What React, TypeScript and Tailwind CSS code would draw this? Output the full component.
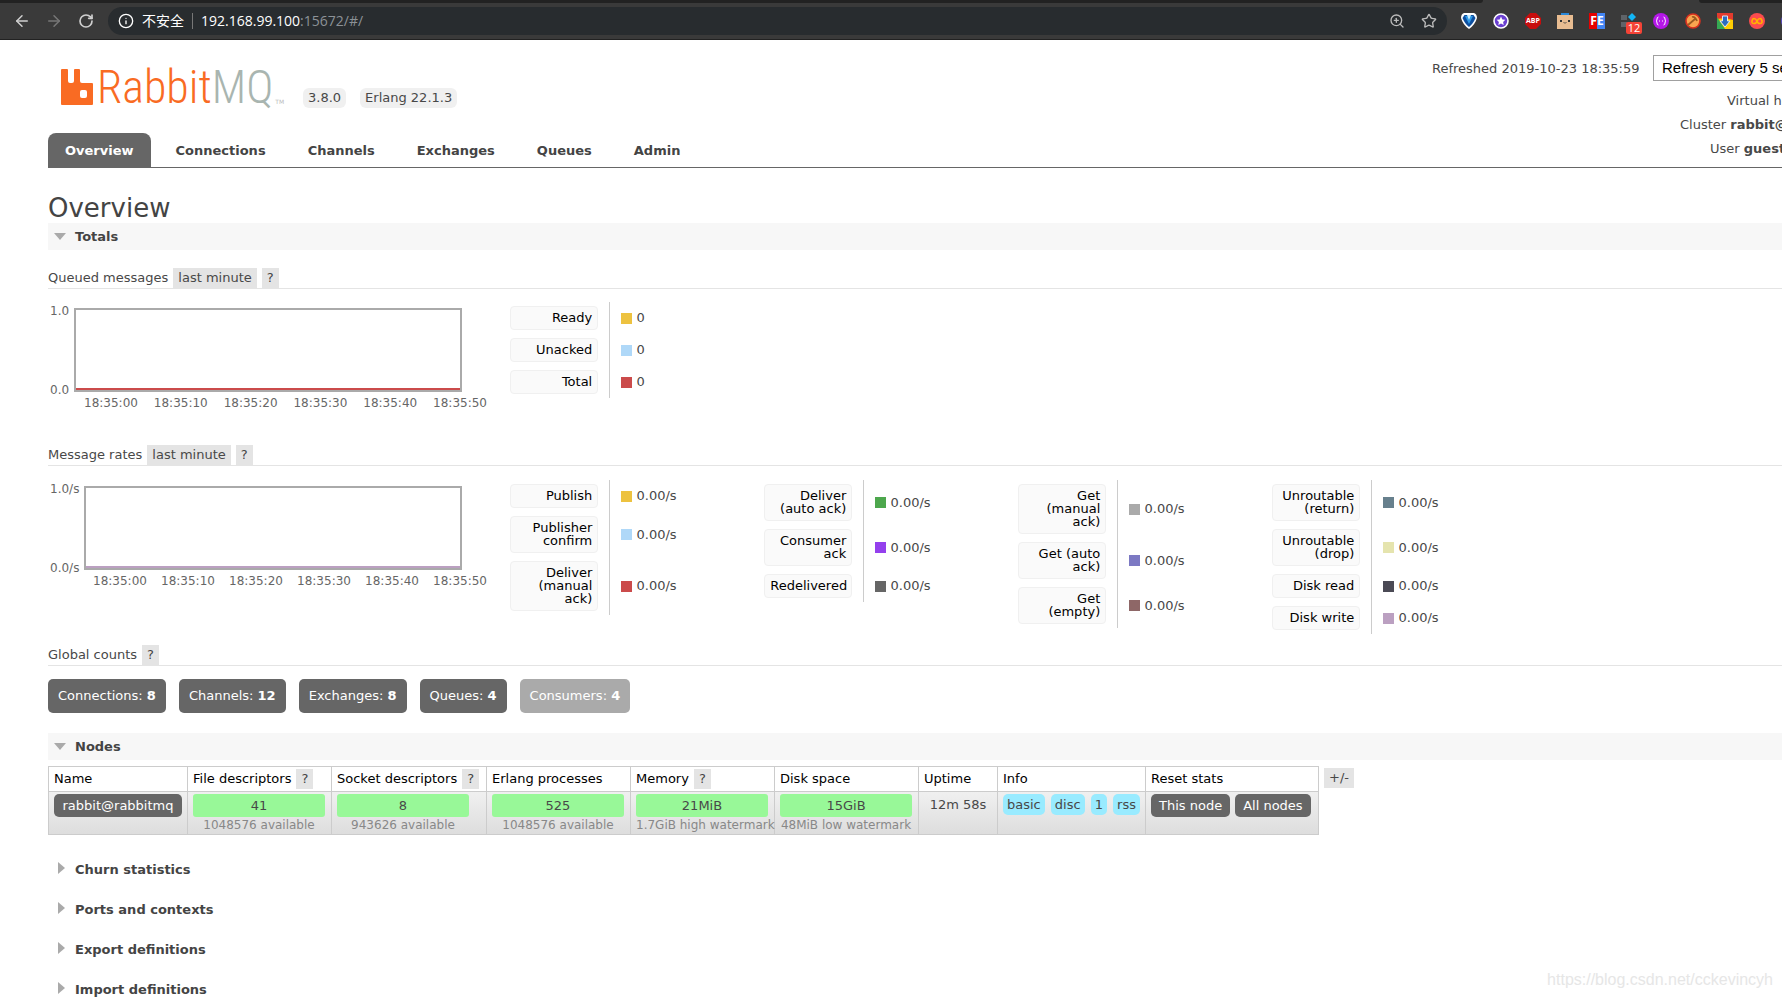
import { ArrowLeft, ArrowRight, Info, RotateCw, Star, ZoomIn } from "lucide-react";
import clsx from "clsx";
import type { ReactNode } from "react";

type LegendItem = { label: string; color: string; value: string };

const tabs = ["Overview", "Connections", "Channels", "Exchanges", "Queues", "Admin"];

const queued: LegendItem[] = [
  { label: "Ready", color: "bg-[#edc240]", value: "0" },
  { label: "Unacked", color: "bg-[#afd8f8]", value: "0" },
  { label: "Total", color: "bg-[#cb4b4b]", value: "0" },
];

const rates: LegendItem[][] = [
  [
    { label: "Publish", color: "bg-[#edc240]", value: "0.00/s" },
    { label: "Publisher confirm", color: "bg-[#afd8f8]", value: "0.00/s" },
    { label: "Deliver (manual ack)", color: "bg-[#cb4b4b]", value: "0.00/s" },
  ],
  [
    { label: "Deliver (auto ack)", color: "bg-[#4da74d]", value: "0.00/s" },
    { label: "Consumer ack", color: "bg-[#9440ed]", value: "0.00/s" },
    { label: "Redelivered", color: "bg-[#666666]", value: "0.00/s" },
  ],
  [
    { label: "Get (manual ack)", color: "bg-[#aaaaaa]", value: "0.00/s" },
    { label: "Get (auto ack)", color: "bg-[#7c79c3]", value: "0.00/s" },
    { label: "Get (empty)", color: "bg-[#8e6767]", value: "0.00/s" },
  ],
  [
    { label: "Unroutable (return)", color: "bg-[#67808d]", value: "0.00/s" },
    { label: "Unroutable (drop)", color: "bg-[#e5e4ae]", value: "0.00/s" },
    { label: "Disk read", color: "bg-[#4b4a55]", value: "0.00/s" },
    { label: "Disk write", color: "bg-[#bba0c1]", value: "0.00/s" },
  ],
];

const counts = [
  { label: "Connections", value: 8 },
  { label: "Channels", value: 12 },
  { label: "Exchanges", value: 8 },
  { label: "Queues", value: 4 },
  { label: "Consumers", value: 4, disabled: true },
];

const columns = [
  { title: "Name", width: "w-[139px]" },
  { title: "File descriptors", width: "w-[144px]", help: true },
  { title: "Socket descriptors", width: "w-[155px]", help: true },
  { title: "Erlang processes", width: "w-[144px]" },
  { title: "Memory", width: "w-[144px]", help: true },
  { title: "Disk space", width: "w-[144px]" },
  { title: "Uptime", width: "w-[79px]" },
  { title: "Info", width: "w-[148px]" },
  { title: "Reset stats", width: "w-[173px]" },
];

const meters = [
  { value: "41", note: "1048576 available" },
  { value: "8", note: "943626 available" },
  { value: "525", note: "1048576 available" },
  { value: "21MiB", note: "1.7GiB high watermark" },
  { value: "15GiB", note: "48MiB low watermark" },
];

const Extensions = () => (
  <div className="flex items-center gap-4">
    <svg className="size-4 shrink-0" viewBox="0 0 16 16">
      <path d="M3 0h10q3 1 3 5-2 7-8 11Q2 12 0 5q0-4 3-5z" fill="#fff" />
      <path d="M3.500 2h9l2 3Q12 11 8 14 4 11 1.500 5z" fill="#0d4fa0" />
      <path d="M4 3h8l-4 8z" fill="#2f9be8" />
      <path d="M6 2h4L8 7z" fill="#c8ecff" />
    </svg>
    <svg className="size-4 shrink-0" viewBox="0 0 16 16">
      <circle cx="8" cy="8" r="7" fill="#6a3fd0" stroke="#fff" strokeWidth="1.6" />
      <path d="M8 3.6l1.3 2.8 3 .4-2.2 2.1.6 3L8 10.4l-2.7 1.5.6-3-2.200-2.100 3-.4z" fill="#fff" />
    </svg>
    <div className="relative flex size-4 shrink-0 items-center justify-center">
      <svg className="absolute inset-0 size-4" viewBox="0 0 16 16">
        <path d="M5 0h6l5 5v6l-5 5H5l-5-5V5z" fill="#c70d0d" />
      </svg>
      <span className="relative text-[7px] font-bold text-white">ABP</span>
    </div>
    <svg className="size-4 shrink-0" viewBox="0 0 16 16">
      <path d="M4 0h8v3H4z" fill="#2b88d8" />
      <path d="M0 2h16v14H0z" fill="#e8bc91" />
      <path d="M3 7h2v2H3zM11 7h2v2h-2z" fill="#333" />
      <path d="M6.500 9.500q.8 1 1.500 0 .7 1 1.500 0" fill="none" stroke="#333" strokeWidth=".8" />
    </svg>
    <div className="flex size-4 shrink-0 items-center justify-center bg-linear-to-r from-[#e60000] from-50% to-[#4285f4] to-50% text-xs font-bold text-white">
      FE
    </div>
    <div className="relative size-4 shrink-0">
      <svg className="size-4" viewBox="0 0 16 16">
        <path d="M0 2h6v5H0zM0 9h6v5H0z" fill="#5f6368" />
        <path d="M11 0l4 4-4 4-4-4z" fill="#12b5f5" />
      </svg>
      <span className="absolute top-[9px] left-[5px] flex h-3 w-4 items-center justify-center rounded-xs bg-[#f44336] text-[11px] text-white">
        12
      </span>
    </div>
    <svg className="size-4 shrink-0" viewBox="0 0 16 16">
      <circle cx="8" cy="8" r="8" fill="#b517e8" />
      <path
        d="M5.500 4Q4 4 4 6T3 8q1 0 1 2t1.500 2M10.500 4Q12 4 12 6t1 2q-1 0-1 2t-1.500 2M6 8h1M9 8h1"
        fill="none"
        stroke="#fff"
      />
    </svg>
    <svg className="size-4 shrink-0" viewBox="0 0 16 16">
      <circle cx="8" cy="8" r="7" fill="#f9a550" stroke="#d9301f" strokeWidth="1.6" />
      <path d="M3 12l7-6M7 4q3-1 5 4" fill="none" stroke="#9a5a22" strokeWidth="1.8" />
    </svg>
    <svg className="size-4 shrink-0" viewBox="0 0 16 16">
      <path d="M0 0h16v16H0z" fill="#ffcd02" />
      <path d="M0 0h16v7L8 5 0 6z" fill="#e33b2e" />
      <path d="M0 4l8 12H0z" fill="#35a853" />
      <path d="M5.500 3h5v5H13l-5 6-5-6h2.500z" fill="#2a6cc0" stroke="#dce8f5" />
    </svg>
    <svg className="size-4 shrink-0" viewBox="0 0 16 16">
      <circle cx="8" cy="8" r="8" fill="#fb4b4e" />
      <path
        d="M8 8Q6.500 5.500 5 5.500T3 8t2 2.500T8 8q1.500-2.500 3-2.500T13 8t-2 2.500T8 8"
        fill="none"
        stroke="#ffb300"
        strokeWidth="1.600"
      />
    </svg>
    <svg className="size-4 shrink-0" viewBox="0 0 16 16">
      <circle cx="8" cy="8" r="8" fill="#5b4bc4" />
    </svg>
  </div>
);

const BrowserBar = () => (
  <div className="shrink-0 border-b border-[#222] bg-[#3a3a3a] font-['Open_Sans','Noto_Sans_CJK_SC',sans-serif]">
    <div className="flex h-[3px]">
      <div className="flex-1 rounded-br bg-[#222]" />
      <div className="w-[216px]" />
      <div className="w-[83px] rounded-bl bg-[#222]" />
    </div>
    <div className="flex h-9 items-center pl-3">
      <button aria-label="Back" className="mr-3 p-px text-[#d0d0d0]">
        <ArrowLeft className="size-[18px]" />
      </button>
      <button aria-label="Forward" className="mr-3 p-px text-[#777]">
        <ArrowRight className="size-[18px]" />
      </button>
      <button aria-label="Reload" className="mr-3 p-px text-[#d0d0d0]">
        <RotateCw className="size-[18px] p-px" strokeWidth={2.5} />
      </button>
      <div className="flex h-7 flex-1 items-center rounded-full bg-[#282c2f] px-2.5 text-sm text-white">
        <Info className="mr-2 size-4" />
        <span>不安全</span>
        <span className="mx-2 h-4 w-px bg-[#777]" />
        <span>192.168.99.100</span>
        <span className="flex-1 text-[#8c9297]">:15672/#/</span>
        <ZoomIn className="mr-4 size-4 text-[#bbb]" />
        <Star className="size-4 text-[#bbb]" />
      </div>
      <div className="w-[335px] shrink-0 pl-[14px]">
        <Extensions />
      </div>
    </div>
  </div>
);

const Logo = () => (
  <a href="#/" className="flex h-[42px] w-[228px] items-end whitespace-nowrap">
    <svg className="mr-1 ml-[3px] h-[38px] w-8 shrink-0" viewBox="3 4 32 38">
      <path
        d="M3 6q0-1 1-1h5q1 0 1 1v11q0 2 2 2h2q2 0 2-2V6q0-1 1-1h4q1 0 1 1v11q0 2 2 2h10q1 0 1 1v20q0 1-1 1H4q-1 0-1-1z"
        fill="#f96b23"
      />
      <rect x="22" y="26" width="7" height="8" rx="2" fill="#fff" />
    </svg>
    <span className="font-['Liberation_Sans_Narrow','Roboto_Condensed','Open_Sans_Condensed',Roboto,sans-serif] text-[46px] leading-[38px] font-light text-[#f96b23]">
      Rabbit<span className="text-[#a9b5b0]">MQ</span>
    </span>
    <span className="pl-0.5 text-[6px] leading-[9px] text-[#bbb]">TM</span>
  </a>
);

const Header = () => (
  <header className="relative border-b border-[#666]">
    <div className="flex h-[93px] items-start pt-6 pl-[10px]">
      <Logo />
      <div className="flex gap-[14px] pt-6 pl-[17px]">
        <span className="rounded-md bg-[#f0f0f0] px-[5px] leading-5">3.8.0</span>
        <span className="rounded-md bg-[#f0f0f0] px-[5px] leading-5">Erlang 22.1.3</span>
      </div>
    </div>
    <nav className="flex">
      {tabs.map((tab, i) => (
        <a
          key={tab}
          href={"#/" + tab.toLowerCase()}
          className={clsx(
            "mr-2 h-[34px] rounded-t-lg px-[17px] pt-px leading-[34px] font-bold",
            i === 0 ? "bg-[#666] text-white" : "text-[#444]",
          )}
        >
          {tab}
        </a>
      ))}
    </nav>
    {/* status block is wider than the window and runs off its right edge */}
    <div className="absolute top-[15px] right-0 w-[350px] overflow-hidden whitespace-nowrap">
      <div className="flex h-[26px] items-center">
        <label htmlFor="refresh" className="w-[221px] shrink-0 pt-0.5">
          Refreshed 2019-10-23 18:35:59
        </label>
        <select
          id="refresh"
          className="h-[26px] w-[220px] shrink-0 appearance-none border border-[#a0a0a0] bg-white px-2 font-['Liberation_Sans',Arial,sans-serif] text-[15px] leading-5 text-black"
        >
          <option>Refresh every 5 seconds</option>
        </select>
      </div>
      <div className="pt-2 leading-6">
        <div className="pl-[295px]">Virtual host</div>
        <div className="pl-[248px]">
          Cluster <b>rabbit@rabbitmq</b>
        </div>
        <div className="pl-[278px]">
          User <b>guest</b>
        </div>
      </div>
    </div>
  </header>
);

const Help = () => <button className="bg-[#e4e4e4] px-[5px] leading-5 text-[#444]">?</button>;

const SectionBar = ({ children }: { children: ReactNode }) => (
  <h2 className="flex h-[27px] items-center gap-[9px] bg-[#f7f7f7] pl-1.5 font-bold text-[#444]">
    <svg className="h-[7px] w-3" viewBox="0 0 12 7">
      <path d="M0 0h12L6 7z" fill="#aaa" />
    </svg>
    {children}
  </h2>
);

const SubHeading = ({ title, range }: { title: string; range?: boolean }) => (
  <h3 className="flex items-end gap-[5px] border-b border-[#e4e4e4] leading-5">
    {title}
    {range && <button className="bg-[#e4e4e4] px-[5px] leading-5">last minute</button>}
    <Help />
  </h3>
);

type ChartProps = { unit: string; line: string; axis: string };

const Chart = ({ unit, line, axis }: ChartProps) => (
  <div className="mr-[22px] w-[440px] shrink-0 text-xs leading-[14px] text-[#666]">
    <div className="flex gap-[5px] pl-0.5">
      <div className="flex h-[95px] flex-col justify-between pt-0.5">
        <span>1.0{unit}</span>
        <span>0.0{unit}</span>
      </div>
      <div className="mt-1.5 mr-[26px] h-[84px] flex-1 border-2 border-[#aaa]">
        <div className={clsx("mt-[78px] h-0.5", line)} />
      </div>
    </div>
    <div className={clsx("flex justify-between pr-px leading-3", axis)}>
      {["00", "10", "20", "30", "40", "50"].map((s) => (
        <span key={s}>18:35:{s}</span>
      ))}
    </div>
  </div>
);

const Legend = ({ items }: { items: LegendItem[] }) => (
  <table className="w-[254px] border-collapse">
    <tbody>
      {items.map((item) => (
        <tr key={item.label}>
          <th className="w-[99px] border-r border-[#ccc] py-1 pr-[10px] font-normal">
            <button className="w-[88px] rounded-sm border border-[#f0f0f0] bg-[#fafafa] px-[5px] pt-1 pb-[5px] text-right leading-[13px] text-black">
              {item.label}
            </button>
          </th>
          <td className="pl-[11px]">
            <div className="flex items-center gap-[5px]">
              <span className={clsx("size-[11px]", item.color)} />
              {item.value}
            </div>
          </td>
        </tr>
      ))}
    </tbody>
  </table>
);

const NodesTable = () => (
  <div className="flex items-start gap-[5px] pt-1.5">
    <table className="w-[1270px] table-fixed border-collapse">
      <thead>
        <tr className="h-[25px] text-black">
          {columns.map((c) => (
            <th
              key={c.title}
              className={clsx("border border-[#ccc] px-[5px] py-0.5 text-left font-normal whitespace-nowrap", c.width)}
            >
              <div className="flex items-center gap-[5px] leading-5">
                {c.title}
                {c.help && <Help />}
              </div>
            </th>
          ))}
        </tr>
      </thead>
      <tbody>
        <tr className="bg-linear-to-b from-[#f0f0f0] to-[#dddddd] align-top whitespace-nowrap">
          <td className="border border-[#ccc] px-[5px] pt-0.5">
            <a href="#/nodes/rabbit" className="block rounded-[5px] bg-[#666] text-center leading-[23px] text-white">
              rabbit@rabbitmq
            </a>
          </td>
          {meters.map((m, i) => (
            <td key={i} className="border border-[#ccc] px-[5px] pt-0.5">
              <div className="w-[132px] text-center">
                <div className="rounded-[3px] bg-[#98f898] leading-[23px]">{m.value}</div>
                <div className="text-xs leading-[17px] text-[#888]">{m.note}</div>
              </div>
            </td>
          ))}
          <td className="border border-[#ccc] pt-0.5 text-center leading-[21px]">12m 58s</td>
          <td className="border border-[#ccc] px-[5px] pt-0.5">
            <div className="flex justify-between">
              {["basic", "disc", "1", "rss"].map((t) => (
                <span key={t} className="rounded-[5px] bg-[#99ebff] px-1 leading-[21px]">
                  {t}
                </span>
              ))}
            </div>
          </td>
          <td className="border border-[#ccc] px-[5px] pt-0.5">
            <div className="flex gap-[5px] text-white">
              <button className="rounded-[5px] bg-[#666] px-2 leading-[23px]">This node</button>
              <button className="rounded-[5px] bg-[#666] px-2 leading-[23px]">All nodes</button>
            </div>
          </td>
        </tr>
      </tbody>
    </table>
    <button className="mt-0.5 bg-[#e4e4e4] px-[5px] leading-5">+/-</button>
  </div>
);

export default function App() {
  return (
    <div className="relative flex h-screen flex-col overflow-hidden bg-white font-['DejaVu_Sans',Verdana,sans-serif] text-[13px] text-[#484848]">
      <BrowserBar />
      <div className="pl-12">
        <Header />
        <main className="pt-[26px]">
          <h1 className="text-[26px] leading-[29px] text-[#444]">Overview</h1>
          <SectionBar>Totals</SectionBar>
          <div className="pt-[18px]">
            <SubHeading title="Queued messages" range />
          </div>
          <div className="flex h-[156px] items-start pt-[13px]">
            <Chart unit="" line="bg-[#cb4b4b]" axis="pl-9" />
            <Legend items={queued} />
          </div>
          <SubHeading title="Message rates" range />
          <div className="flex h-[179px] items-start pt-[14px]">
            <Chart unit="/s" line="bg-[#bba0c1]" axis="pl-[45px]" />
            {rates.map((items, i) => (
              <Legend key={i} items={items} />
            ))}
          </div>
          <SubHeading title="Global counts" />
          <div className="flex gap-[13px] pt-[13px] pb-5">
            {counts.map((c) => (
              <a
                key={c.label}
                href={"#/" + c.label.toLowerCase()}
                className={clsx(
                  "rounded-[5px] px-2.5 leading-[34px] text-white",
                  c.disabled ? "bg-[#aaa]" : "bg-[#666]",
                )}
              >
                {c.label}: <b>{c.value}</b>
              </a>
            ))}
          </div>
          <SectionBar>Nodes</SectionBar>
          <NodesTable />
          <div className="pt-[15px]">
            {["Churn statistics", "Ports and contexts", "Export definitions", "Import definitions"].map((title) => (
              <h2 key={title} className="flex h-10 items-center gap-[10px] pl-[10px] font-bold text-[#444]">
                <svg className="mb-1 h-3 w-[7px]" viewBox="0 0 7 12">
                  <path d="M0 0v12l7-6z" fill="#aaa" />
                </svg>
                {title}
              </h2>
            ))}
          </div>
        </main>
      </div>
      <div className="absolute right-[9px] bottom-1.5 font-['Liberation_Sans',Arial,sans-serif] text-base text-[#e6e6e6]">
        https://blog.csdn.net/cckevincyh
      </div>
    </div>
  );
}
